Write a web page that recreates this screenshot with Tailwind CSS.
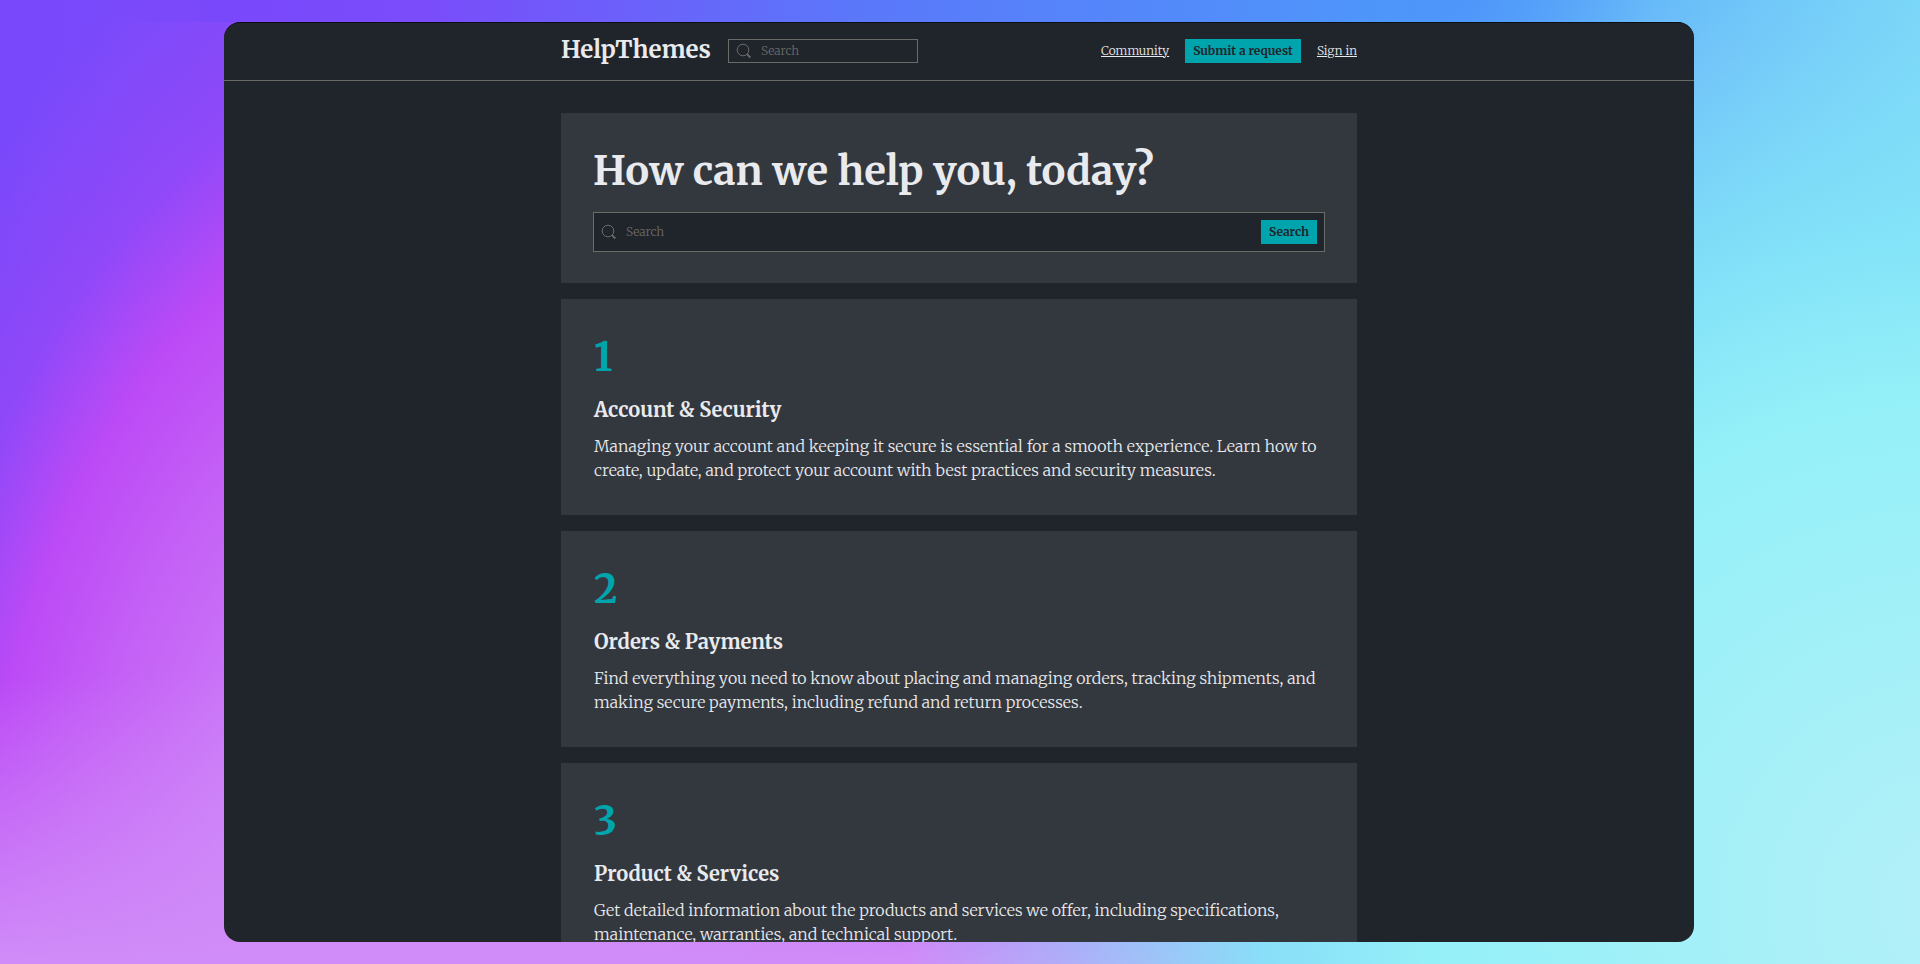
<!DOCTYPE html>
<html lang="en">
<head>
<meta charset="utf-8">
<meta name="viewport" content="width=device-width, initial-scale=1">
<title>HelpThemes</title>
<script src="https://cdn.jsdelivr.net/npm/@tailwindcss/browser@4"></script>
</head>
<body class="h-screen overflow-hidden bg-[linear-gradient(90deg,#7848fa_0%,#7a4cfa_15%,#5a78fa_45%,#4e96fa_75%,#74d6f8_100%)] font-['Merriweather','Liberation_Serif',serif] font-light text-[#e8eaed]">
<div class="h-full bg-[linear-gradient(90deg,#7848fa00_5%,#7848fa_12%,#7a4cfa_22%,#5a78fa_45%,#4e96fa_72%,#4e96fa00_86%),radial-gradient(ellipse_55%_106%_at_102%_94%,#b4f0f8_0%,#94f0f8_50%,#84e4f8ee_66%,#88d8f866_86%,#88d8f800_100%),linear-gradient(0deg,#d08cf8_0%,#d08cf800_30%),radial-gradient(ellipse_35%_119%_at_23%_104%,#d08cf8_0%,#cc7cf8_36%,#c460f6_56%,#bc4af6_70%,#9c48f8aa_82%,#7a48fa00_100%)] bg-[size:100%_22px,100%_100%,100%_100%,100%_100%] bg-no-repeat py-[22px] pr-[226px] pl-[224px]">
  <div class="h-full overflow-hidden rounded-2xl border-t border-[#0c0f13] bg-[#20242b]">
    <header class="border-b border-[#6b6b69] px-8">
      <div class="mx-auto flex h-[57px] max-w-[796px] items-center gap-4 pb-px">
        <a href="#" class="w-[151px] pb-0.5 text-2xl leading-8 font-bold whitespace-nowrap">HelpThemes</a>
        <form class="flex h-6 w-[190px] items-center gap-[9px] border border-[#6b6b69] px-[7px] text-[#6b6b69]">
          <svg class="size-4 shrink-0" viewBox="0 0 16 16" fill="none" stroke="currentColor" aria-hidden="true"><circle cx="7" cy="7" r="5.8"/><path d="m11 11.2 3.3 3.3" stroke-width="1.8"/></svg>
          <input aria-label="Search" placeholder="Search" class="w-full min-w-0 bg-transparent text-xs outline-none placeholder:text-[#6b6b69]">
        </form>
        <nav class="ml-auto flex items-center gap-4 text-xs">
          <a href="#" class="underline">Community</a>
          <a href="#" class="flex h-6 items-center bg-[#00a4ad] px-2 font-bold whitespace-nowrap text-[#20242b]">Submit a request</a>
          <a href="#" class="underline">Sign in</a>
        </nav>
      </div>
    </header>
    <main class="mx-auto mt-8 flex max-w-[796px] flex-col gap-4">
      <section class="bg-[#33373e] px-8 pt-[33px] pb-[31px]">
        <h1 class="text-[40px] leading-[50px] font-bold">How can we help you, today?</h1>
        <form class="mt-4 flex h-10 items-center gap-[9px] border border-[#6b6b69] bg-[#20242b] px-[7px] text-[#6b6b69]">
          <svg class="size-4 shrink-0" viewBox="0 0 16 16" fill="none" stroke="currentColor" aria-hidden="true"><circle cx="7" cy="7" r="5.8"/><path d="m11 11.2 3.3 3.3" stroke-width="1.8"/></svg>
          <input aria-label="Search" placeholder="Search" class="w-full min-w-0 bg-transparent text-xs outline-none placeholder:text-[#6b6b69]">
          <button class="h-6 shrink-0 bg-[#00a4ad] px-2 text-xs font-bold text-[#20242b]">Search</button>
        </form>
      </section>
      <a href="#" class="block bg-[#33373e] p-[33px]">
        <span class="block text-[40px] leading-[50px] font-bold text-[#00a4ad]">1</span>
        <h2 class="mt-3 text-xl leading-8 font-bold">Account &amp; Security</h2>
        <p class="mt-2 text-base leading-6">Managing your account and keeping it secure is essential for a smooth experience. Learn how to create, update, and protect your account with best practices and security measures.</p>
      </a>
      <a href="#" class="block bg-[#33373e] p-[33px]">
        <span class="block text-[40px] leading-[50px] font-bold text-[#00a4ad]">2</span>
        <h2 class="mt-3 text-xl leading-8 font-bold">Orders &amp; Payments</h2>
        <p class="mt-2 text-base leading-6">Find everything you need to know about placing and managing orders, tracking shipments, and making secure payments, including refund and return processes.</p>
      </a>
      <a href="#" class="block bg-[#33373e] p-[33px]">
        <span class="block text-[40px] leading-[50px] font-bold text-[#00a4ad]">3</span>
        <h2 class="mt-3 text-xl leading-8 font-bold">Product &amp; Services</h2>
        <p class="mt-2 text-base leading-6">Get detailed information about the products and services we offer, including specifications, maintenance, warranties, and technical support.</p>
      </a>
    </main>
  </div>
</div>
</body>
</html>
